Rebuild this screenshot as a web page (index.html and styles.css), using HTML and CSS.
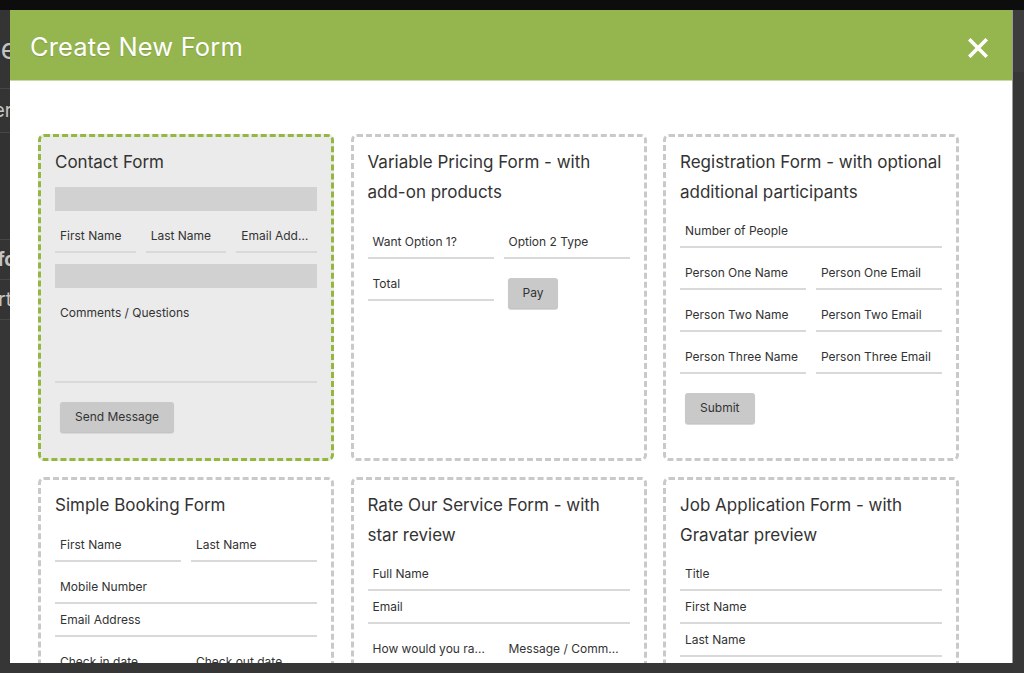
FILE: index.html
```html
<!DOCTYPE html>
<html lang="en">
<head>
<meta charset="utf-8">
<title>Create New Form</title>
<link rel="stylesheet" href="styles.css">
</head>
<body>
<div class="topbar"></div>
<div class="page">
  <div class="side">
    <div class="side-row sr1"><span class="t-big">Code</span></div>
    <div class="side-row sr2"><span class="t-mid">Order</span></div>
    <div class="side-row sr3"></div>
    <div class="side-row sr4"><span class="t-mid bold">Info</span></div>
    <div class="side-row sr5"><span class="t-mid">Start</span></div>
  </div>
  <div class="fill"></div>
  <div class="rail"><div class="rail-top"></div></div>
</div>

<div class="modal">
  <div class="modal-header">
    <h1 class="modal-title">Create New Form</h1>
    <svg class="close" width="20" height="20" viewBox="0 0 20 20" aria-label="Close">
      <path d="M2.5 2.5 L17.5 17.5 M17.5 2.5 L2.5 17.5" stroke="#fff" stroke-width="3.6" stroke-linecap="square" fill="none"/>
    </svg>
  </div>
  <div class="modal-body">
    <div class="grid">
      <!-- Contact Form -->
      <div class="card selected">
        <div class="card-title t-contact">Contact Form</div>
        <div class="bar"></div>
        <div class="row row-contact">
          <div class="field">First Name</div>
          <div class="field">Last Name</div>
          <div class="field">Email Address</div>
        </div>
        <div class="bar"></div>
        <div class="field textarea">Comments / Questions</div>
        <div class="actions a-contact"><span class="btn">Send Message</span></div>
      </div>

      <!-- Variable Pricing -->
      <div class="card">
        <div class="card-title">Variable Pricing Form - with<br>add-on products</div>
        <div class="row row-spaced">
          <div class="field">Want Option 1?</div>
          <div class="field">Option 2 Type</div>
        </div>
        <div class="row">
          <div class="field">Total</div>
          <div class="btn-cell"><span class="btn">Pay</span></div>
        </div>
      </div>

      <!-- Registration -->
      <div class="card">
        <div class="card-title">Registration Form - with optional<br>additional participants</div>
        <div class="field">Number of People</div>
        <div class="row">
          <div class="field">Person One Name</div>
          <div class="field">Person One Email</div>
        </div>
        <div class="row">
          <div class="field">Person Two Name</div>
          <div class="field">Person Two Email</div>
        </div>
        <div class="row">
          <div class="field">Person Three Name</div>
          <div class="field">Person Three Email</div>
        </div>
        <div class="actions"><span class="btn">Submit</span></div>
      </div>

      <!-- Simple Booking -->
      <div class="card">
        <div class="card-title">Simple Booking Form</div>
        <div class="row">
          <div class="field">First Name</div>
          <div class="field">Last Name</div>
        </div>
        <div class="field">Mobile Number</div>
        <div class="field">Email Address</div>
        <div class="row">
          <div class="field">Check in date</div>
          <div class="field">Check out date</div>
        </div>
      </div>

      <!-- Rate Our Service -->
      <div class="card">
        <div class="card-title">Rate Our Service Form - with<br>star review</div>
        <div class="field">Full Name</div>
        <div class="field">Email</div>
        <div class="row">
          <div class="field">How would you rate our service?</div>
          <div class="field">Message / Comments</div>
        </div>
      </div>

      <!-- Job Application -->
      <div class="card">
        <div class="card-title">Job Application Form - with<br>Gravatar preview</div>
        <div class="field">Title</div>
        <div class="field">First Name</div>
        <div class="field">Last Name</div>
        <div class="field">Email Address</div>
      </div>
    </div>
  </div>
</div>
</body>
</html>
```

FILE: styles.css
```css
* { box-sizing: border-box; }

html, body {
  margin: 0;
  padding: 0;
  height: 100%;
  overflow: hidden;
}

body {
  background: #363636;
  font-family: Inter, "Liberation Sans", Arial, sans-serif;
  color: #333;
}

.topbar {
  height: 10px;
  background: #0d0d0d;
}

/* dimmed page behind the modal */
.page {
  display: flex;
  height: 663px;
}

.side {
  width: 10px;
  display: flex;
  flex-direction: column;
}

.side-row {
  display: flex;
  justify-content: flex-end;
  align-items: center;
  overflow: hidden;
  white-space: nowrap;
  border-bottom: 1px solid #464646;
  color: #c4c4c4;
  background: #343434;
}

.sr1 { height: 79px; }
.sr2 { height: 44px; }
.sr3 { height: 107px; background: #323232; }
.sr4 { height: 40px; }
.sr5 { height: 40px; }

.t-big { font-size: 28px; margin-right: -7px; }
.t-mid { font-size: 19px; margin-right: -2px; }
.bold { font-weight: 700; margin-right: -6px; }

.fill { flex: 1; }

.rail {
  width: 11px;
  background: #373737;
}

.rail-top {
  height: 62px;
  background: #3d3d3d;
}

/* modal */
.modal {
  position: fixed;
  left: 10px;
  top: 10px;
  width: 1003px;
  height: 653px;
  background: #fff;
  overflow: hidden;
  border-right: 1px solid #9a9a9a;
}

.modal-header {
  height: 71px;
  background: #95b54f;
  border-bottom: 1px solid #c8d9a9;
  display: flex;
  align-items: center;
  justify-content: space-between;
  padding: 0 24px 0 20px;
}

.modal-title {
  margin: 2px 0 0;
  font-size: 25.5px;
  font-weight: 400;
  color: #fff;
  letter-spacing: 0.15px;
  text-shadow: 0 1px 1px rgba(0, 0, 0, 0.12);
}

.close {
  display: block;
  margin-top: 6px;
}

.modal-body {
  padding: 53px 0 0 28px;
}

.grid {
  display: grid;
  grid-template-columns: repeat(3, 296px);
  grid-auto-rows: 327px;
  column-gap: 16.5px;
  row-gap: 16px;
}

.card {
  border: 3px dashed #c9c9c9;
  border-radius: 6px;
  padding: 10px 14px 0 14px;
  overflow: hidden;
  background: #fff;
}

.card.selected {
  border-color: #94b83f;
  background: #ebebeb;
}

.card-title {
  font-size: 17px;
  line-height: 30px;
  color: #333;
  margin-bottom: 8px;
  white-space: nowrap;
}

.t-contact { margin-bottom: 10px; }

.bar {
  height: 24px;
  background: #d1d1d1;
}

.row {
  display: grid;
  grid-auto-flow: column;
  grid-auto-columns: minmax(0, 1fr);
  column-gap: 10px;
  margin: 9px 0;
  align-items: start;
}

.row-contact { margin: 9px 0 11px; }
.row-spaced { margin-top: 19px; }

.field {
  height: 33px;
  padding: 8px 5px 7px;
  border-bottom: 2px solid #d9d9d9;
  font-size: 12px;
  line-height: 16px;
  color: #333;
  white-space: nowrap;
  overflow: hidden;
  text-overflow: ellipsis;
}

.field.textarea {
  height: 86px;
  margin-top: 9px;
}

.btn-cell {
  padding: 10px 0 0 4px;
}

.actions {
  margin-top: 19px;
  padding-left: 5px;
}

.btn {
  display: inline-block;
  height: 30px;
  line-height: 30px;
  padding: 0 15px;
  background: #c9c9c9;
  color: #333;
  font-size: 12px;
  border-radius: 3px;
  box-shadow: 0 1px 1px rgba(0, 0, 0, 0.12), 0 2px 0 #dcdcdc;
}
```
